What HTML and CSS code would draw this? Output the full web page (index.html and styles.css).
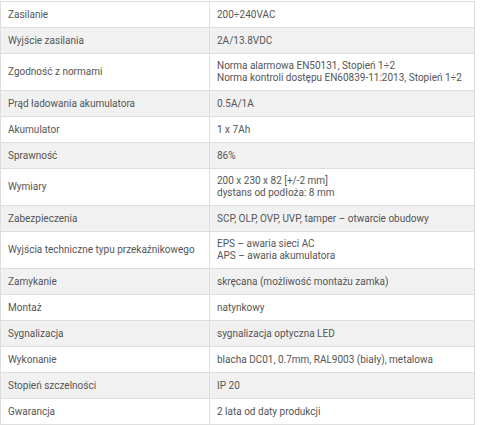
FILE: index.html
```html
<!DOCTYPE html>
<html lang="pl">
<head>
<meta charset="utf-8">
<link rel="stylesheet" href="styles.css">
</head>
<body>
<table class="spec">
  <tr><td class="k">Zasilanie</td><td class="v">200÷240VAC</td></tr>
  <tr class="alt"><td class="k">Wyjście zasilania</td><td class="v">2A/13.8VDC</td></tr>
  <tr><td class="k">Zgodność z normami</td><td class="v">Norma alarmowa EN50131, Stopień 1÷2<br>Norma kontroli dostępu EN60839-11:2013, Stopień 1÷2</td></tr>
  <tr class="alt"><td class="k">Prąd ładowania akumulatora</td><td class="v">0.5A/1A</td></tr>
  <tr><td class="k">Akumulator</td><td class="v">1 x 7Ah</td></tr>
  <tr class="alt"><td class="k">Sprawność</td><td class="v">86%</td></tr>
  <tr><td class="k">Wymiary</td><td class="v">200 x 230 x 82 [+/-2 mm]<br>dystans od podłoża: 8 mm</td></tr>
  <tr class="alt"><td class="k">Zabezpieczenia</td><td class="v">SCP, OLP, OVP, UVP, tamper – otwarcie obudowy</td></tr>
  <tr><td class="k">Wyjścia techniczne typu przekaźnikowego</td><td class="v">EPS – awaria sieci AC<br>APS – awaria akumulatora</td></tr>
  <tr class="alt"><td class="k">Zamykanie</td><td class="v">skręcana (możliwość montażu zamka)</td></tr>
  <tr><td class="k">Montaż</td><td class="v">natynkowy</td></tr>
  <tr class="alt"><td class="k">Sygnalizacja</td><td class="v">sygnalizacja optyczna LED</td></tr>
  <tr><td class="k">Wykonanie</td><td class="v">blacha DC01, 0.7mm, RAL9003 (biały), metalowa</td></tr>
  <tr class="alt"><td class="k">Stopień szczelności</td><td class="v">IP 20</td></tr>
  <tr><td class="k">Gwarancja</td><td class="v">2 lata od daty produkcji</td></tr>
</table>
</body>
</html>
```

FILE: styles.css
```css
html, body {
  margin: 0;
  padding: 0;
  background: #ffffff;
}

body {
  font-family: Roboto, "Liberation Sans", sans-serif;
  font-size: 10px;
  color: #555555;
}

.spec {
  margin-top: 1px;
  width: 475px;
  border-collapse: collapse;
  table-layout: fixed;
}

.spec td {
  border: 1px solid #dedede;
  height: 26px;
  padding: 6px 7px;
  line-height: 12px;
  vertical-align: middle;
  box-sizing: border-box;
  white-space: nowrap;
}

.spec .k {
  width: 209px;
}

.spec .alt td {
  background: #f1f1f1;
}
```
